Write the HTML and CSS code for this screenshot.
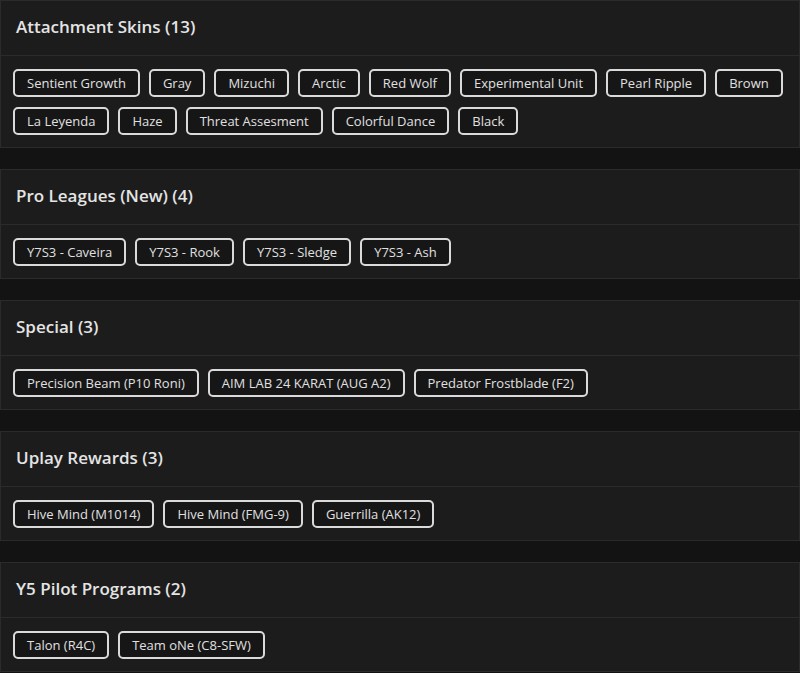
FILE: index.html
```html
<!DOCTYPE html>
<html lang="en">
<head>
    <meta charset="UTF-8" />
    <meta name="viewport" content="width=device-width, initial-scale=1.0" />
    <title>Skins</title>
    <link rel="stylesheet" href="styles.css">
</head>
<body>

    <!-- Attachment skins -->
    <div class="card">
        <div class="card-header">Attachment Skins (13)</div>
        <div class="card-body">
            <button class="tag">Sentient Growth</button>
            <button class="tag">Gray</button>
            <button class="tag">Mizuchi</button>
            <button class="tag">Arctic</button>
            <button class="tag">Red Wolf</button>
            <button class="tag">Experimental Unit</button>
            <button class="tag">Pearl Ripple</button>
            <button class="tag">Brown</button>
            <button class="tag">La Leyenda</button>
            <button class="tag">Haze</button>
            <button class="tag">Threat Assesment</button>
            <button class="tag">Colorful Dance</button>
            <button class="tag">Black</button>
        </div>
    </div>

    <div class="card">
        <div class="card-header">Pro Leagues (New) (4)</div>
        <div class="card-body">
            <button class="tag">Y7S3 - Caveira</button>
            <button class="tag">Y7S3 - Rook</button>
            <button class="tag">Y7S3 - Sledge</button>
            <button class="tag">Y7S3 - Ash</button>
        </div>
    </div>

    <div class="card">
        <div class="card-header">Special (3)</div>
        <div class="card-body">
            <button class="tag">Precision Beam (P10 Roni)</button>
            <button class="tag">AIM LAB 24 KARAT (AUG A2)</button>
            <button class="tag">Predator Frostblade (F2)</button>
        </div>
    </div>

    <div class="card">
        <div class="card-header">Uplay Rewards (3)</div>
        <div class="card-body">
            <button class="tag">Hive Mind (M1014)</button>
            <button class="tag">Hive Mind (FMG-9)</button>
            <button class="tag">Guerrilla (AK12)</button>
        </div>
    </div>

    <div class="card">
        <div class="card-header">Y5 Pilot Programs (2)</div>
        <div class="card-body">
            <button class="tag">Talon (R4C)</button>
            <button class="tag">Team oNe (C8-SFW)</button>
        </div>
    </div>

</body>
</html>
```

FILE: styles.css
```css
* {
    margin: 0;
    padding: 0;
    box-sizing: border-box;
}
body {
    background: #131313;
    font-family: "Open Sans", "Noto Sans", sans-serif;
    color: #e2e2e2;
    display: flex;
    flex-direction: column;
    gap: 21px;
}
.card {
    background: #1c1c1c;
    border: 1px solid #2b2b2b;
}
.card-header {
    height: 55px;
    display: flex;
    align-items: center;
    padding: 0 15px 4px;
    font-size: 17px;
    font-weight: 600;
    color: #e4e4e4;
    border-bottom: 1px solid #2b2b2b;
}
.card-body {
    display: flex;
    flex-wrap: wrap;
    gap: 10px 9px;
    padding: 13px 12px 12px;
}
.tag {
    height: 28px;
    padding: 0 12px;
    background: #161616;
    color: #e0e0e0;
    border: 2px solid #dadada;
    border-radius: 5px;
    font-family: inherit;
    font-size: 13px;
    cursor: pointer;
}
.tag:hover {
    background: #262626;
}
```
